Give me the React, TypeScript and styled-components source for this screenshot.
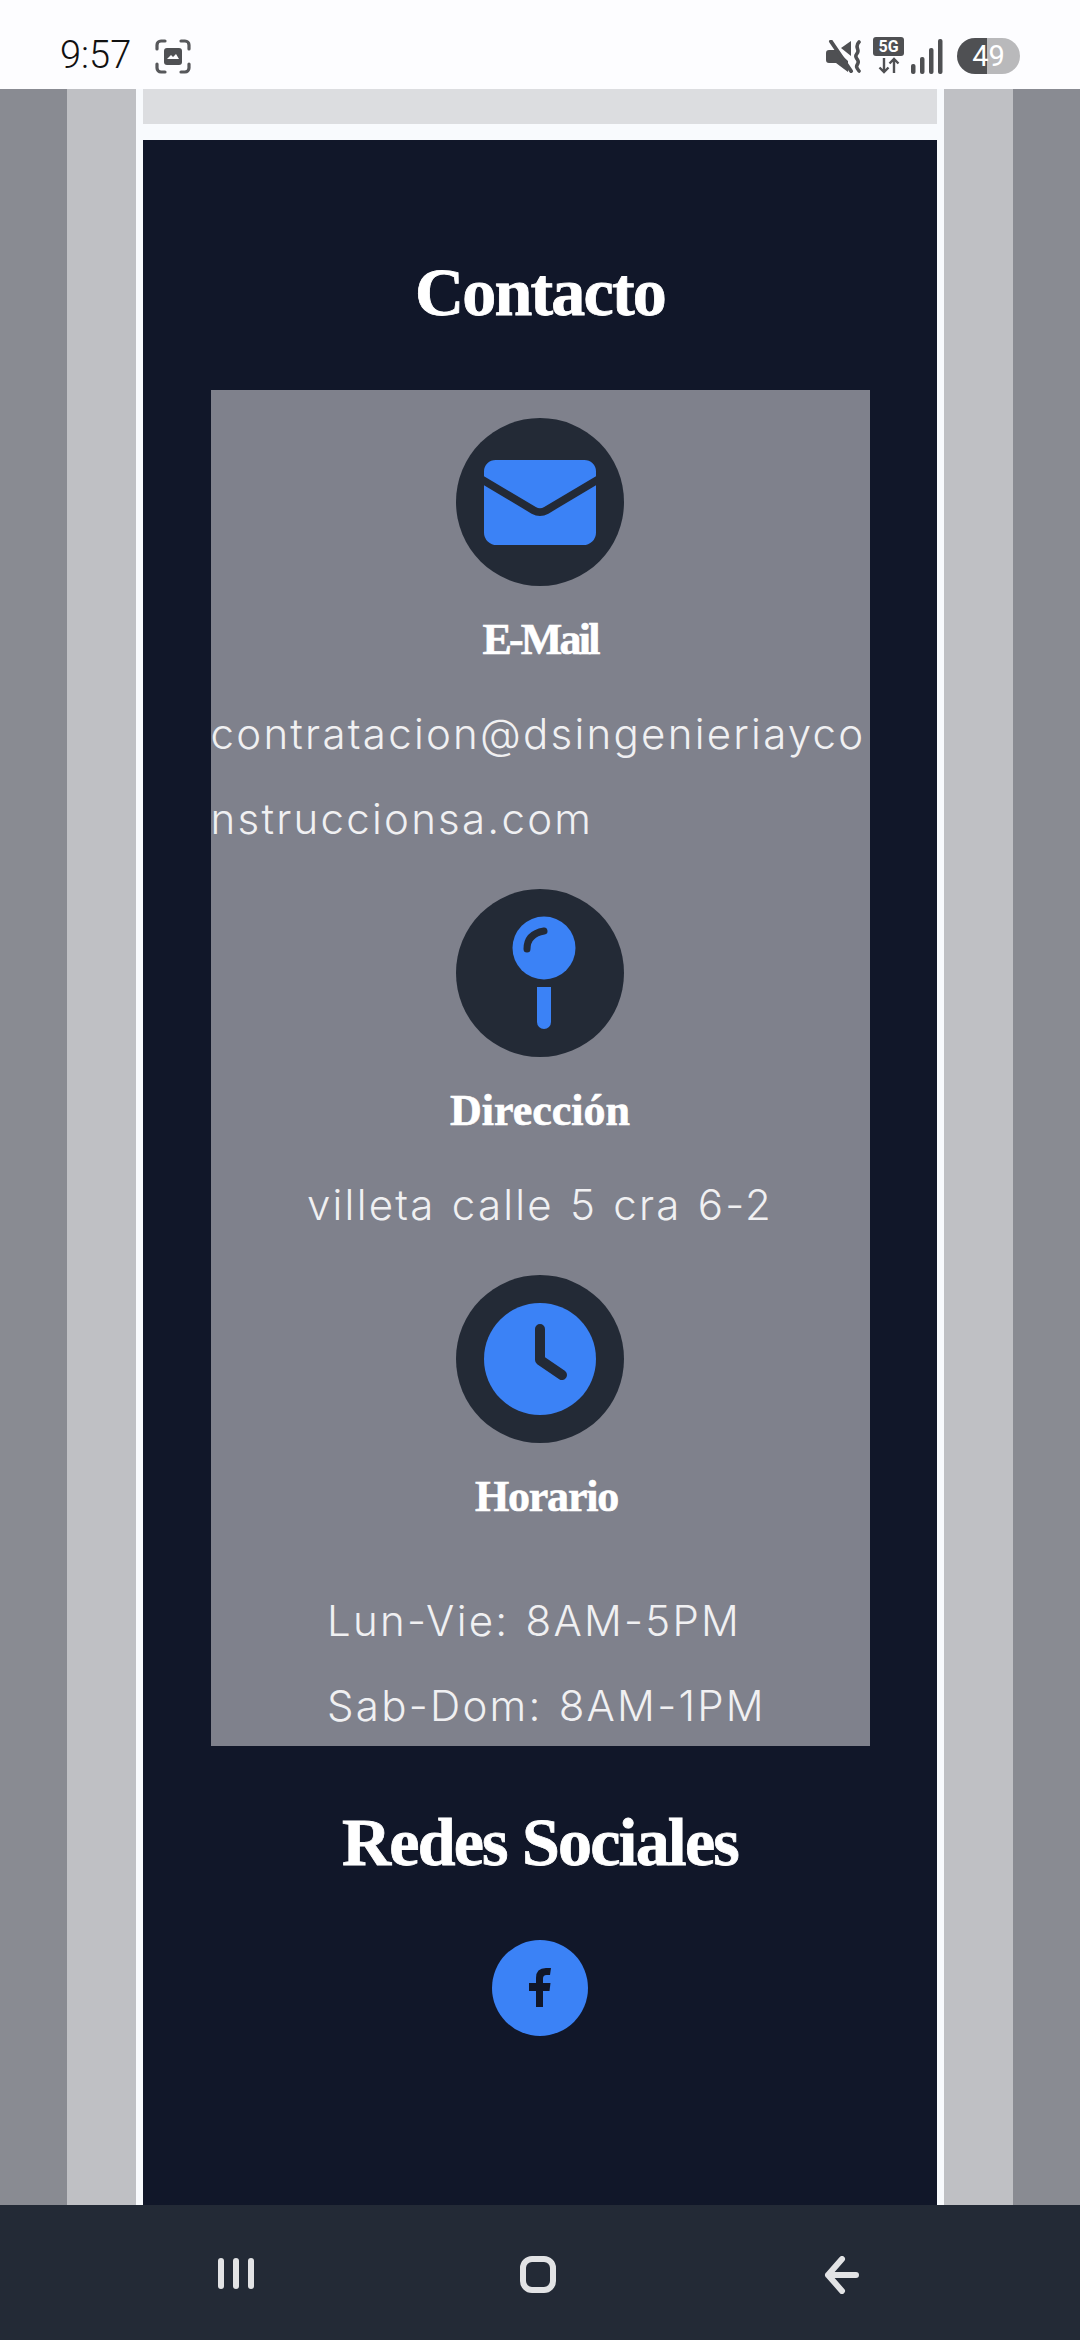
import React from "react";
import styled, { createGlobalStyle } from "styled-components";

const Global = createGlobalStyle`
  html, body { margin: 0; padding: 0; background: #232a36; }
  * { box-sizing: border-box; }
`;
const Screen = styled.div`
  width: 1080px; height: 2340px; display: flex; flex-direction: column; overflow: hidden;
`;
const StatusBar = styled.header`
  height: 89px; flex: none; background: #fdfdff; display: flex; justify-content: space-between;
  padding: 0 60px 0 60px; align-items: flex-start;
`;
const StatusLeft = styled.div`
  display: flex; align-items: flex-start; gap: 21px; padding-top: 35px;
`;
const Clock = styled.span`
  font: 300 38px/40px Roboto, sans-serif; color: #111; width: 74px; white-space: nowrap;
`;
const ShotIcon = styled.svg`
  width: 36px; height: 35px; margin-top: 4px; display: block;
`;
const StatusRight = styled.div`
  display: flex; align-items: flex-start; padding-top: 37px;
`;
const MuteIcon = styled.svg`
  width: 37px; height: 33px; margin-top: 3px; display: block;
`;
const NetBox = styled.div`
  width: 31px; margin-left: 10px; display: flex; flex-direction: column; align-items: center;
`;
const NetLabel = styled.span`
  width: 31px; height: 19px; background: #4f5053; color: #fff; border-radius: 3px;
  font: 700 16px/19px Roboto, sans-serif; text-align: center;
`;
const ArrowIcon = styled.svg`
  width: 22px; height: 17px; margin-top: 1px; display: block;
`;
const SignalIcon = styled.svg`
  width: 32px; height: 35px; margin: 2px 0 0 7px; display: block;
`;
const Battery = styled.div`
  width: 63px; height: 36px; margin: 1px 0 0 14px; border-radius: 18px;
  background: linear-gradient(90deg, #4f5053 0 30px, #b9b9bb 30px 100%);
  color: #fff; font: 400 29px/37px Roboto, sans-serif; text-align: center;
`;
const Viewport = styled.div`
  flex: 1; min-height: 0; display: flex;
`;
const Stripe = styled.div<{ $w: number; $c: string }>`
  width: ${p => p.$w}px; flex: none; background: ${p => p.$c};
`;
const Page = styled.main`
  flex: 1; min-width: 0; background: #f8fafd; padding: 0 7px; display: flex; flex-direction: column;
`;
const TopStrip = styled.div`
  height: 35px; flex: none; background: #dcdde0; margin-bottom: 16px;
`;
const Dark = styled.section`
  flex: 1; min-height: 0; background: #111729; padding: 112px 0 0; display: flex; flex-direction: column;
  align-items: center; overflow: hidden;
`;
const Heading = styled.h2<{ $top?: number }>`
  margin: ${p => p.$top ?? 0}px 0 58px; font: 700 68px/80px "Liberation Serif", serif; color: #fff;
  text-align: center; letter-spacing: -1.8px; -webkit-text-stroke: 0.8px #fff;
`;
const Panel = styled.div`
  width: 659px; height: 1356px; flex: none; background: #7f818c; padding-top: 28px; display: flex;
  flex-direction: column; align-items: center; gap: 28px; overflow: hidden;
`;
const Item = styled.article`
  display: flex; flex-direction: column; align-items: center; width: 100%;
`;
const IconCircle = styled.div`
  width: 168px; height: 168px; border-radius: 50%; background: #232a36; flex: none;
  svg { display: block; width: 168px; height: 168px; }
`;
const ItemTitle = styled.h3<{ $ls: number }>`
  margin: 26px 0 23px; font: 700 44px/56px "Liberation Serif", serif; color: #fff; text-align: center;
  letter-spacing: ${p => p.$ls}px; -webkit-text-stroke: 0.6px #fff;
`;
const Body = styled.p<{ $width?: number }>`
  margin: 0; font: 350 42px/85px Inter, sans-serif; color: #f0f0f2; text-align: left; letter-spacing: 2.25px;
  word-spacing: 2px; width: ${p => (p.$width ? `${p.$width}px` : "auto")}; word-break: break-all;
`;
const HoursBlock = styled.div`
  display: flex; flex-direction: column; align-items: center; margin-left: 13px;
  h3 { margin-bottom: 53px; }
`;
const HourLine = styled(Body)`
  align-self: flex-start; white-space: nowrap;
`;
const Social = styled.a`
  width: 96px; height: 96px; border-radius: 50%; background: #3b82f6; display: block;
  svg { display: block; width: 96px; height: 96px; }
`;
const NavBar = styled.nav`
  height: 135px; flex: none; background: #232a36; display: flex; align-items: flex-start;
  padding: 51px 0 0 0;
`;
const NavSlot = styled.div<{ $w: number; $pl: number }>`
  width: ${p => p.$w}px; padding-left: ${p => p.$pl}px; flex: none;
  svg { display: block; }
`;

const BLUE = "#3b82f6";
const DARK = "#232a36";

export default function App() {
  return (
    <Screen>
      <Global />
      <StatusBar>
        <StatusLeft>
          <Clock>9:57</Clock>
          <ShotIcon viewBox="0 0 36 35" fill="none">
            <path d="M2 10V6a4 4 0 0 1 4-4h4M26 2h4a4 4 0 0 1 4 4v4M34 25v4a4 4 0 0 1-4 4h-4M10 33H6a4 4 0 0 1-4-4v-4" stroke="#57585b" strokeWidth="3.2" strokeLinecap="round" />
            <rect x="9" y="9" width="18" height="17" rx="3" fill="#4f5053" />
            <path d="M12 20l4-4 2 2 3-3 3 5z" fill="#fdfdff" />
          </ShotIcon>
        </StatusLeft>
        <StatusRight>
          <MuteIcon viewBox="0 0 37 33">
            <path d="M0 13C0 11 1 10 3 10H10L22 21V32L10 23H3C1 23 0 22 0 20z" fill="#4f5053" />
            <path d="M5 1.500L25 31" stroke="#4f5053" strokeWidth="4" strokeLinecap="round" fill="none" />
            <path d="M15 8L25 1V16z" fill="#4f5053" />
            <path d="M33 2c-4 4-1 6-1 9s-3 3-2 6 3 3 2 6-3 3 1 8" stroke="#4f5053" strokeWidth="3.600" strokeLinecap="round" fill="none" />
          </MuteIcon>
          <NetBox>
            <NetLabel>5G</NetLabel>
            <ArrowIcon viewBox="0 0 22 17" fill="none" stroke="#4f5053" strokeWidth="2.400">
              <path d="M6 1v14M1.500 10.500L6 15l4.500-4.500M16 16V2M11.500 6.500L16 2l4.500 4.500" />
            </ArrowIcon>
          </NetBox>
          <SignalIcon viewBox="0 0 32 35" fill="#4f5053">
            <rect x="0" y="25" width="4.500" height="10" rx="2" />
            <rect x="9" y="18" width="4.500" height="17" rx="2" />
            <rect x="18" y="9" width="4.500" height="26" rx="2" />
            <rect x="27" y="0" width="4.500" height="35" rx="2" />
          </SignalIcon>
          <Battery>49</Battery>
        </StatusRight>
      </StatusBar>
      <Viewport>
        <Stripe $w={67} $c="#898b92" />
        <Stripe $w={69} $c="#bfc0c4" />
        <Page>
          <TopStrip />
          <Dark>
            <Heading>Contacto</Heading>
            <Panel>
              <Item>
                <IconCircle>
                  <svg viewBox="0 0 168 168">
                    <g transform="translate(28 42) scale(5.333 5.150) translate(-1.5 -3.75)" fill={BLUE}>
                      <path d="M1.5 8.67v9.2a2.4 2.4 0 002.4 2.4h16.2a2.4 2.4 0 002.4-2.4V8.67l-8.928 5.493a3 3 0 01-3.144 0L1.5 8.67z" />
                      <path d="M22.5 6.908V5.950a2.2 2.2 0 00-2.2-2.200H3.700a2.2 2.2 0 00-2.200 2.200v.958l9.714 5.978a1.500 1.500 0 001.572 0L22.500 6.908z" />
                    </g>
                  </svg>
                </IconCircle>
                <ItemTitle $ls={-2.8}>E-Mail</ItemTitle>
                <Body $width={659}>contratacion@dsingenieriayconstruccionsa.com</Body>
              </Item>
              <Item>
                <IconCircle>
                  <svg viewBox="0 0 168 168">
                    <circle cx="88" cy="59" r="31.500" fill={BLUE} />
                    <path d="M81 98h14v35a7 7 0 0 1-14 0z" fill={BLUE} />
                    <path d="M71 60Q71 45 88 42" fill="none" stroke={DARK} strokeWidth="7" strokeLinecap="round" />
                  </svg>
                </IconCircle>
                <ItemTitle $ls={0}>Dirección</ItemTitle>
                <Body>villeta calle 5 cra 6-2</Body>
              </Item>
              <Item>
                <IconCircle>
                  <svg viewBox="0 0 168 168">
                    <circle cx="84" cy="84" r="56" fill={BLUE} />
                    <path d="M84 54V85L106 100" fill="none" stroke={DARK} strokeWidth="10" strokeLinecap="round" strokeLinejoin="round" />
                  </svg>
                </IconCircle>
                <HoursBlock>
                  <ItemTitle $ls={-1.2}>Horario</ItemTitle>
                  <HourLine>Lun-Vie: 8AM-5PM</HourLine>
                  <HourLine>Sab-Dom: 8AM-1PM</HourLine>
                </HoursBlock>
              </Item>
            </Panel>
            <Heading $top={56}>Redes Sociales</Heading>
            <Social>
              <svg viewBox="0 0 96 96" fill="#111729">
                <path d="M44 67V51H37V43H44V38Q44 28 54 28H59L58 35H54.500Q51 35 51 38.500V43H58.500L57.500 51H51V67Z" />
              </svg>
            </Social>
          </Dark>
        </Page>
        <Stripe $w={69} $c="#bfc0c4" />
        <Stripe $w={67} $c="#898b92" />
      </Viewport>
      <NavBar>
        <NavSlot $w={520} $pl={218}>
          <svg width="36" height="34" viewBox="0 0 36 34" fill="#e2e3e5">
            <rect x="0" y="2" width="6" height="31" rx="3" />
            <rect x="15" y="2" width="6" height="31" rx="3" />
            <rect x="30" y="2" width="6" height="31" rx="3" />
          </svg>
        </NavSlot>
        <NavSlot $w={304} $pl={0}>
          <svg width="36" height="37" viewBox="0 0 36 37" fill="none" stroke="#e2e3e5" strokeWidth="6">
            <rect x="3" y="3" width="30" height="31" rx="9" />
          </svg>
        </NavSlot>
        <NavSlot $w={40} $pl={0}>
          <svg width="36" height="38" viewBox="0 0 36 38" fill="none" stroke="#e2e3e5" strokeWidth="6" strokeLinecap="round" strokeLinejoin="round">
            <path d="M18 3L4 19l14 16M4 19h28" />
          </svg>
        </NavSlot>
      </NavBar>
    </Screen>
  );
}
